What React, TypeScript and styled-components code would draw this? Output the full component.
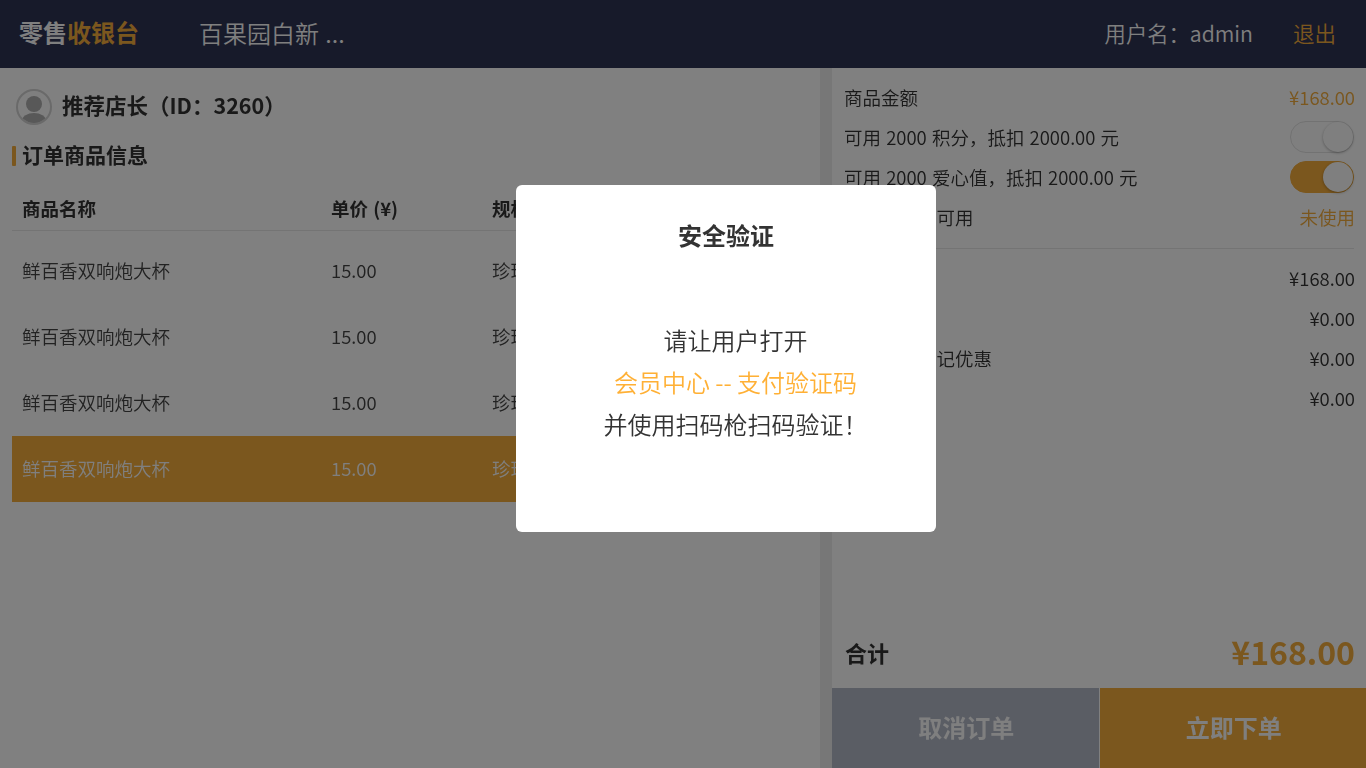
import React from "react";
import styled, { createGlobalStyle } from "styled-components";

const Global = createGlobalStyle`
  html, body { margin: 0; padding: 0; width: 1366px; height: 768px; overflow: hidden; background: #fff; }
  body { font-family: "Noto Sans CJK SC", "Noto Sans", sans-serif; color: #333; }
  * { box-sizing: border-box; }
`;

const brand = "#f6ae3c";

const Page = styled.div`
  position: relative; width: 1366px; height: 768px; display: flex; flex-direction: column; overflow: hidden;
  opacity: 0.999;
`;
const Header = styled.header`
  height: 68px; flex: none; background: #2e3454; display: flex; align-items: center; padding: 0 30px 4px 19px;
`;
const Logo = styled.div`
  width: 181px; font-size: 24px; font-weight: 700; color: #fff; line-height: 34px;
  span { color: ${brand}; }
`;
const Store = styled.div` font-size: 24px; color: #fff; font-weight: 350; margin-left: -1px; word-spacing: 1px; `;
const Spacer = styled.div` flex: 1; `;
const UserName = styled.div` font-size: 21.3px; color: #fff; font-weight: 350; margin-right: 40px; `;
const Logout = styled.div` font-size: 21.5px; color: ${brand}; font-weight: 350; `;

const Body = styled.main` flex: 1; display: flex; min-height: 0; `;
const Left = styled.section` width: 820px; flex: none; padding: 21px 0 0 12px; `;
const Gutter = styled.div` width: 12px; flex: none; background: #eeeeee; `;
const Right = styled.section` flex: 1; display: flex; flex-direction: column; min-width: 0; `;

const Member = styled.div` display: flex; align-items: center; height: 36px; padding-left: 4px; gap: 10px; `;
const Avatar = styled.svg` width: 36px; height: 36px; flex: none; display: block; `;
const MemberName = styled.div` font-size: 21.5px; font-weight: 700; color: #333; line-height: 32px; padding-bottom: 4px; `;
const SectionTitle = styled.h2`
  margin: 21px 0 0; height: 20px; font-size: 21px; font-weight: 700; color: #333; line-height: 16px;
  display: flex; align-items: center; gap: 6px;
  span { display: block; padding-bottom: 4px; }
  &::before { content: ""; width: 4px; height: 20px; background: ${brand}; border-radius: 1px; }
`;
const Table = styled.div` margin-top: 22px; `;
const Columns = "309px 161px 1fr";
const HeadRow = styled.div`
  display: grid; grid-template-columns: ${Columns}; height: 43px; padding: 0 0 2px 10px; align-items: center;
  border-bottom: 1px solid #e8e8e8; font-size: 18.5px; font-weight: 700; color: #333; word-spacing: 1px;
`;
const Row = styled.div<{ $active?: boolean }>`
  display: grid; grid-template-columns: ${Columns}; height: 66px; padding: 0 0 2px 10px; align-items: center;
  font-size: 18.5px; font-weight: 350;
  color: ${(p) => (p.$active ? "#fff" : "#444")};
  background: ${(p) => (p.$active ? brand : "transparent")};
`;
const Rows = styled.div` padding-top: 7px; `;

const Summary = styled.div` padding: 9px 11px 0 12px; `;
const Line = styled.div`
  height: 40px; display: flex; align-items: center; justify-content: space-between; font-size: 18.5px; font-weight: 350; color: #333; word-spacing: 1px;
`;
const Accent = styled.span` color: ${brand}; `;
const Toggle = styled.div<{ $on?: boolean }>`
  position: relative; width: 64px; height: 32px; border-radius: 16px; margin-right: 1px;
  background: ${(p) => (p.$on ? brand : "#fff")};
  border: 1px solid ${(p) => (p.$on ? brand : "#e4e4e4")};
  &::after {
    content: ""; position: absolute; top: 0; right: 0; width: 30px; height: 30px; border-radius: 50%; background: #fff;
    box-shadow: 0 1px 3px rgba(0,0,0,.3);
  }
`;
const Divider = styled.div` height: 1px; background: #e8e8e8; margin: 11px 1px 9px 0; `;
const Fill = styled.div` flex: 1; `;
const Total = styled.div`
  height: 70px; display: flex; align-items: center; justify-content: space-between; padding: 0 11px 0 13px;
`;
const TotalLabel = styled.div` font-size: 22px; font-weight: 700; color: #333; padding-bottom: 2px; `;
const TotalValue = styled.div` font-size: 32px; font-weight: 700; color: ${brand}; padding-bottom: 4px; `;
const Actions = styled.div` height: 80px; flex: none; display: flex; gap: 1px; `;
const ActionButton = styled.button<{ $primary?: boolean }>`
  flex: 1; border: 0; padding: 0 0 4px 2px; font-family: inherit; font-size: 24px; font-weight: 700; color: #fff;
  background: ${(p) => (p.$primary ? brand : "#b5bac9")};
`;

const Overlay = styled.div` position: absolute; inset: 0; background: rgba(0,0,0,.5); `;
const Dialog = styled.div`
  position: absolute; left: 516px; top: 185px; width: 420px; height: 347px; background: #fff; border-radius: 6px;
  display: flex; flex-direction: column; align-items: center; padding-top: 32px;
`;
const DialogTitle = styled.h3` margin: 0; font-size: 24px; font-weight: 700; line-height: 36px; color: #333; `;
const DialogText = styled.div` margin-top: 66px; padding-left: 19px; font-size: 24px; font-weight: 350; line-height: 42px; color: #333; text-align: center; `;
const Orange = styled.div` color: #ffb035; `;

const rows = [0, 1, 2, 3];

export default function App() {
  return (
    <Page>
      <Global />
      <Header>
        <Logo>零售<span>收银台</span></Logo>
        <Store>百果园白新 ...</Store>
        <Spacer />
        <UserName>用户名：admin</UserName>
        <Logout>退出</Logout>
      </Header>
      <Body>
        <Left>
          <Member>
            <Avatar viewBox="0 0 36 36">
              <defs>
                <clipPath id="av"><circle cx="18" cy="18" r="16" /></clipPath>
              </defs>
              <circle cx="18" cy="18" r="17" fill="#fff" stroke="#d4d4d4" strokeWidth="2" />
              <g clipPath="url(#av)" fill="#b0b0b0">
                <circle cx="18" cy="15" r="8" />
                <ellipse cx="18" cy="32" rx="12" ry="8" />
              </g>
            </Avatar>
            <MemberName>推荐店长（ID：3260）</MemberName>
          </Member>
          <SectionTitle><span>订单商品信息</span></SectionTitle>
          <Table>
            <HeadRow>
              <span>商品名称</span>
              <span>单价 (¥)</span>
              <span>规格</span>
            </HeadRow>
            <Rows>
              {rows.map((r) => (
                <Row key={r} $active={r === 3}>
                  <span>鲜百香双响炮大杯</span>
                  <span>15.00</span>
                  <span>珍珠</span>
                </Row>
              ))}
            </Rows>
          </Table>
        </Left>
        <Gutter />
        <Right>
          <Summary>
            <Line><span>商品金额</span><Accent>¥168.00</Accent></Line>
            <Line><span>可用 2000 积分，抵扣 2000.00 元</span><Toggle /></Line>
            <Line><span>可用 2000 爱心值，抵扣 2000.00 元</span><Toggle $on /></Line>
            <Line><span>暂无优惠券可用</span><Accent>未使用</Accent></Line>
            <Divider />
            <Line><span>商品金额</span><span>¥168.00</span></Line>
            <Line><span>积分抵扣</span><span>¥0.00</span></Line>
            <Line><span>推荐店长登记优惠</span><span>¥0.00</span></Line>
            <Line><span /><span>¥0.00</span></Line>
          </Summary>
          <Fill />
          <Total>
            <TotalLabel>合计</TotalLabel>
            <TotalValue>¥168.00</TotalValue>
          </Total>
          <Actions>
            <ActionButton>取消订单</ActionButton>
            <ActionButton $primary>立即下单</ActionButton>
          </Actions>
        </Right>
      </Body>
      <Overlay />
      <Dialog>
        <DialogTitle>安全验证</DialogTitle>
        <DialogText>
          <div>请让用户打开</div>
          <Orange>会员中心 -- 支付验证码</Orange>
          <div>并使用扫码枪扫码验证！</div>
        </DialogText>
      </Dialog>
    </Page>
  );
}
